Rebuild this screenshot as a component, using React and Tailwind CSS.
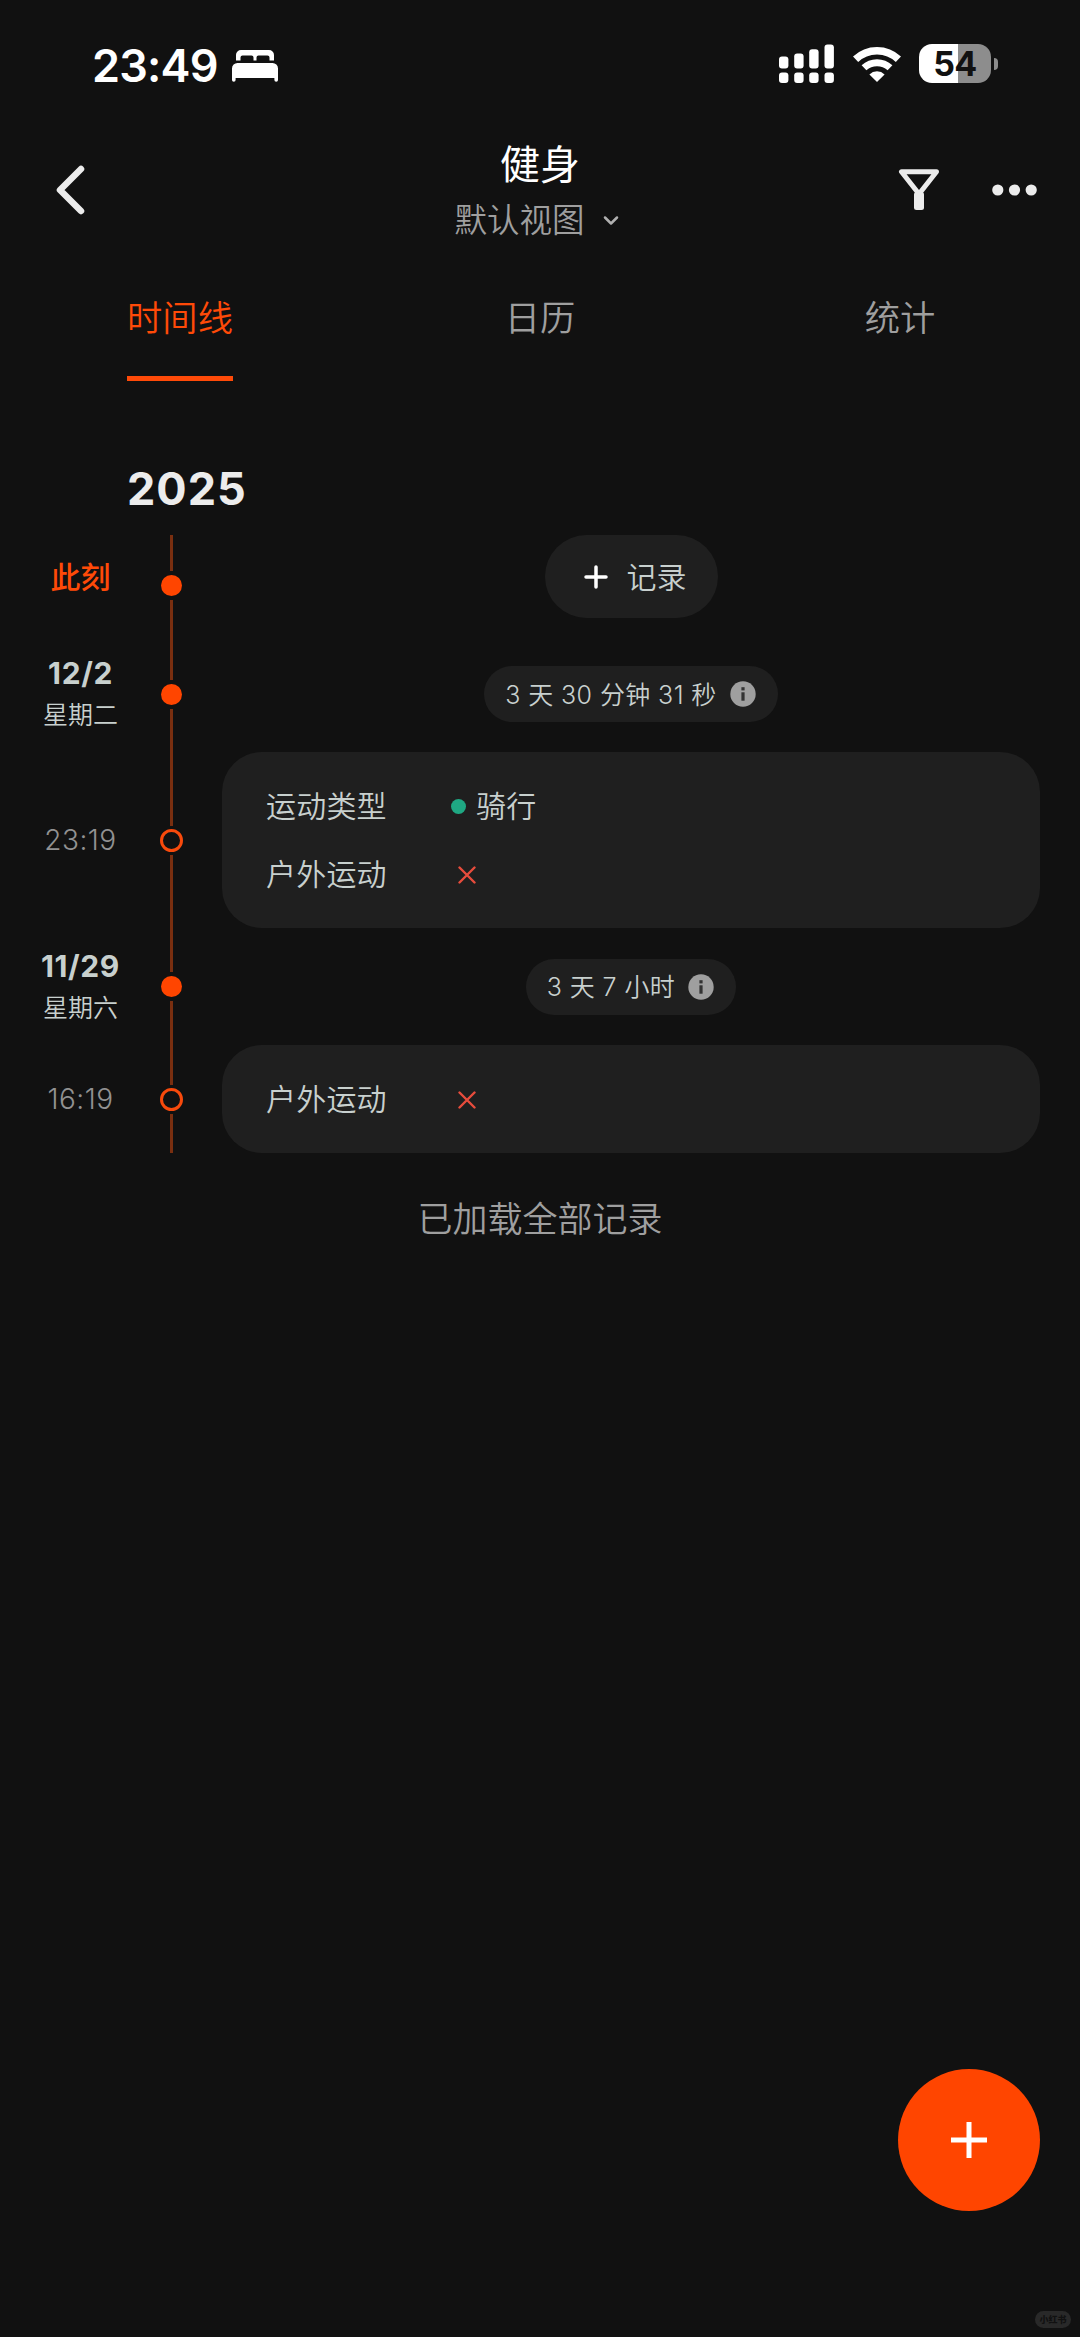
import React from 'react';
import clsx from 'clsx';

const tabs = ['时间线', '日历', '统计'];

function BedIcon() {
    return (
        <svg width="46" height="33" viewBox="0 0 46 33" fill="#fff">
            <path d="M4 11.5V6a5 5 0 0 1 5-5h28a5 5 0 0 1 5 5v5.500h-4.500V8.500a2 2 0 0 0-2-2h-9a2 2 0 0 0-2 2v3h-3v-3a2 2 0 0 0-2-2h-9a2 2 0 0 0-2 2v3z" />
            <path d="M0 19.500a5.500 5.500 0 0 1 5.500-5.500h35a5.500 5.500 0 0 1 5.500 5.500V31a1.800 1.800 0 0 1-3.600 0v-2H3.600v2A1.800 1.800 0 0 1 0 31z" />
        </svg>
    );
}

function SignalIcon() {
    return (
        <svg width="56" height="40" viewBox="0 0 56 40" fill="#fff">
            <rect x="0" y="12.500" width="9.400" height="12" rx="3" />
            <rect x="15.200" y="9.500" width="9.400" height="15" rx="3" />
            <rect x="30.200" y="5.200" width="9.400" height="19.300" rx="3" />
            <rect x="45.500" y="0.500" width="9.400" height="24" rx="3" />
            <rect x="0" y="28.500" width="9.400" height="10.500" rx="3" />
            <rect x="15.200" y="28.500" width="9.400" height="10.500" rx="3" />
            <rect x="30.200" y="28.500" width="9.400" height="10.500" rx="3" />
            <rect x="45.500" y="28.500" width="9.400" height="10.500" rx="3" />
        </svg>
    );
}

function WifiIcon() {
    return (
        <svg width="48" height="38" viewBox="0 0 48 38" fill="none" stroke="#fff">
            <path d="M2.600 14.200a31 31 0 0 1 42.800 0" strokeWidth="7.500" />
            <path d="M11 22.800a19 19 0 0 1 26 0" strokeWidth="7" />
            <path d="M24 37l-7.600-7.600a11 11 0 0 1 15.200 0z" fill="#fff" stroke="none" />
        </svg>
    );
}

function Battery({ level }) {
    return (
        <div className="flex items-center gap-[3px]">
            <div className="flex h-[39px] w-[72px] items-center justify-center rounded-[13px] bg-[linear-gradient(90deg,#fff_54%,#8d8d8d_54%)] text-[34px] font-bold leading-none tracking-[-0.5px] text-[#111]">
                {level}
            </div>
            <div className="h-3 w-1 rounded-r-full bg-[#8d8d8d]" />
        </div>
    );
}

function InfoIcon() {
    return (
        <svg width="26" height="26" viewBox="0 0 26 26">
            <circle cx="13" cy="13" r="12.700" fill="#9f9f9f" />
            <rect x="11.400" y="6.200" width="3.200" height="3.200" fill="#333" />
            <rect x="11.400" y="11.300" width="3.200" height="8.400" fill="#333" />
        </svg>
    );
}

function CrossIcon() {
    return (
        <svg width="18" height="18" viewBox="0 0 18 18" fill="none" stroke="#e74c3c" strokeWidth="2.400" strokeLinecap="round">
            <path d="M1.500 1.500l15 15M16.500 1.500l-15 15" />
        </svg>
    );
}

function Axis({ hollow }) {
    return (
        <div className="flex w-[23px] shrink-0 flex-col items-center">
            <div className="w-[3px] flex-1 bg-[#7a2f10]" />
            <div
                className={clsx(
                    'rounded-full',
                    hollow ? 'my-[3px] size-[23px] border-[3px] border-[#f84a0c]' : 'my-1 size-[21px] bg-[#ff4500]'
                )}
            />
            <div className="w-[3px] flex-1 bg-[#7a2f10]" />
        </div>
    );
}

function Row({ className, label, hollow, children }) {
    return (
        <div className={clsx('flex pr-10', className)}>
            <div className="flex w-[160px] shrink-0 flex-col items-center justify-center pl-px">{label}</div>
            <Axis hollow={hollow} />
            <div className="ml-[39px] flex flex-1 flex-col items-center justify-center">{children}</div>
        </div>
    );
}

function DateRow({ className, date, weekday, duration }) {
    return (
        <Row
            className={className}
            label={
                <>
                    <span className="text-[30px] font-bold leading-[42px] tracking-[0.6px] text-[#c8d0ce]">{date}</span>
                    <span className="text-[25px] font-[350] leading-[42px] text-[#c8d0ce]">{weekday}</span>
                </>
            }
        >
            <div className="flex h-14 items-center gap-[13px] rounded-full bg-[#1f1f1f] pl-[21px] pr-[22px]">
                <span className="whitespace-pre pt-0.5 text-[25px] font-[350] leading-none tracking-[0.4px] text-[#c8d0ce]">{duration}</span>
                <InfoIcon />
            </div>
        </Row>
    );
}

function Field({ name, children }) {
    return (
        <div className="flex h-[68px] items-center pt-px text-[30px] font-[350] tracking-[0.2px] text-[#c8d0ce]">
            <span className="w-[185px]">{name}</span>
            {children}
        </div>
    );
}

function RecordRow({ className, time, children }) {
    return (
        <Row
            className={className}
            hollow
            label={<span className="text-[28px] font-[350] tracking-[0.5px] text-[#929292]">{time}</span>}
        >
            <div className="flex w-full flex-1 flex-col justify-center rounded-[40px] bg-[#1f1f1f] pl-[44px]">{children}</div>
        </Row>
    );
}

export default function App() {
    return (
        <div className="relative flex h-[2337px] w-[1080px] flex-col overflow-hidden bg-[#111] font-['Inter','Noto_Sans_CJK_SC',sans-serif]">
            <div className="flex h-[130px] items-center justify-between pl-[92px] pr-[82px]">
                <div className="flex items-center gap-[14px]">
                    <span className="text-[45px] font-semibold leading-none tracking-[-0.8px] text-white">23:49</span>
                    <BedIcon />
                </div>
                <div className="flex items-center gap-[18px] pb-[3px]">
                    <SignalIcon />
                    <WifiIcon />
                    <Battery level={54} />
                </div>
            </div>

            <header className="flex h-[120px] items-center justify-between pl-[54px] pr-[43px]">
                <button className="w-[128px]">
                    <svg width="33" height="52" viewBox="0 0 33 52" fill="none" stroke="#ececec" strokeWidth="6.500" strokeLinecap="round" strokeLinejoin="round">
                        <path d="M27 5L6 26l21 21" />
                    </svg>
                </button>
                <div className="flex flex-col items-center pt-1.5">
                    <h1 className="text-[40px] font-normal leading-[56px] text-white">健身</h1>
                    <button className="flex items-center gap-[18px] pr-[7px] text-[32.500px] font-[350] leading-[56px] text-[#9f9f9f]">
                        默认视图
                        <svg width="16" height="12" viewBox="0 0 16 12" fill="none" stroke="#b0b0b0" strokeWidth="2.500" strokeLinecap="round" strokeLinejoin="round">
                            <path d="M2 2.500l6 6 6-6" />
                        </svg>
                    </button>
                </div>
                <div className="flex items-center gap-[52px]">
                    <svg width="42" height="44" viewBox="0 0 42 44" fill="none" stroke="#ececec" strokeLinejoin="round">
                        <path d="M3.500 3.800h35L21 26z" strokeWidth="5" />
                        <rect x="16" y="24" width="10" height="18" rx="2.500" fill="#ececec" stroke="none" />
                    </svg>
                    <svg width="45" height="12" viewBox="0 0 45 12" fill="#ececec">
                        <circle cx="5.800" cy="6" r="5.600" />
                        <circle cx="22.500" cy="6" r="5.600" />
                        <circle cx="39.200" cy="6" r="5.600" />
                    </svg>
                </div>
            </header>

            <nav className="flex h-[131px]">
                {tabs.map((tab, i) => (
                    <div key={tab} className="flex flex-1 justify-center">
                        <button
                            className={clsx(
                                'border-b-[5px] pt-[38px] pb-[26px] text-[35.300px] font-[350] leading-none',
                                i === 0 ? 'border-[#ff4a08] text-[#ff4a08]' : 'border-transparent text-[#9f9f9f]'
                            )}
                        >
                            {tab}
                        </button>
                    </div>
                ))}
            </nav>

            <h2 className="mt-[81px] h-[73px] pl-[127px] text-[45px] font-bold leading-[54px] tracking-[1px] text-[#ececec]">2025</h2>

            <Row
                className="h-[101px]"
                label={<span className="pb-[17px] text-[30px] font-medium leading-none text-[#ff4a08]">此刻</span>}
            >
                <button className="mb-[18px] flex h-[83px] items-center gap-[19px] rounded-full bg-[#1f1f1f] pl-[39px] pr-[31px] pt-px text-[30px] font-[350] text-[#c8d0ce]">
                    <svg width="24" height="24" viewBox="0 0 24 24" fill="none" stroke="#fff" strokeWidth="3.500" strokeLinecap="round">
                        <path d="M12 2v20M2 12h20" />
                    </svg>
                    记录
                </button>
            </Row>
            <DateRow className="h-[116px]" date="12/2" weekday="星期二" duration="3 天 30 分钟 31 秒" />
            <RecordRow className="h-[176px]" time="23:19">
                <Field name="运动类型">
                    <span className="mr-[10px] size-[15px] rounded-full bg-[#1fa883]" />
                    骑行
                </Field>
                <Field name="户外运动">
                    <span className="ml-[7px]"><CrossIcon /></span>
                </Field>
            </RecordRow>
            <DateRow className="h-[117px]" date="11/29" weekday="星期六" duration="3 天 7 小时" />
            <RecordRow className="h-[108px]" time="16:19">
                <Field name="户外运动">
                    <span className="ml-[7px]"><CrossIcon /></span>
                </Field>
            </RecordRow>

            <p className="mt-[39px] text-center text-[35px] font-[350] leading-[54px] text-[#9f9f9f]">已加载全部记录</p>

            <button className="absolute right-10 top-[2069px] flex size-[142px] items-center justify-center rounded-full bg-[#ff4500]">
                <svg width="36" height="36" viewBox="0 0 36 36" fill="none" stroke="#fff" strokeWidth="5">
                    <path d="M18 0v36M0 18h36" />
                </svg>
            </button>
            <span className="absolute right-[9px] top-[2311px] flex h-[17px] w-9 items-center justify-center rounded-full bg-[#292929] text-[9px] font-black leading-none text-[#111]">
                小红书
            </span>
        </div>
    );
}
